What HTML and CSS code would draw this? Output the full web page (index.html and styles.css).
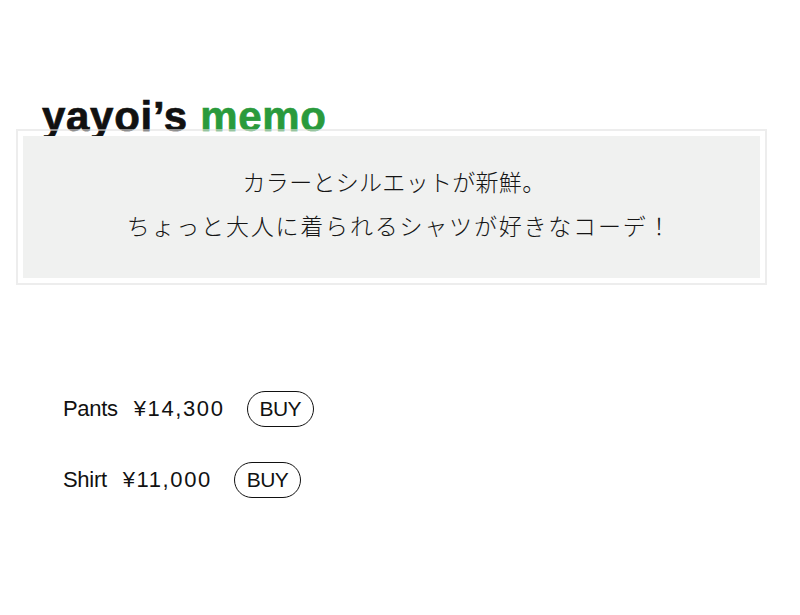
FILE: index.html
```html
<!DOCTYPE html>
<html>
<head>
    <title>yayoi's memo</title>
    <link rel="stylesheet" href="styles.css">
</head>
<body>
    <div class="page">
        <div class="memo-title">yayoi’s <span class="memo-green">memo</span></div>
        <div class="memo-box">
            <div class="memo-inner">
                <p class="line-short">カラーとシルエットが新鮮。</p>
                <p class="line-long">ちょっと大人に着られるシャツが好きなコーデ！</p>
            </div>
        </div>

        <div class="items">
            <div class="item">
                <span class="item-name">Pants</span>
                <span class="item-price">¥14,300</span>
                <a class="buy-btn">BUY</a>
            </div>
            <div class="item">
                <span class="item-name">Shirt</span>
                <span class="item-price">¥11,000</span>
                <a class="buy-btn">BUY</a>
            </div>
        </div>
    </div>
</body>
</html>
```

FILE: styles.css
```css
body {
    margin: 0;
    background: #fff;
    color: #222;
    font-family: "Liberation Sans", "Noto Sans CJK JP", sans-serif;
}

.page {
    padding: 93px 33px 0 16px;
}

.memo-title {
    margin-left: 26px;
    font-family: "Liberation Sans", sans-serif;
    font-weight: bold;
    font-size: 42px;
    line-height: 48px;
    letter-spacing: 0.7px;
    color: #111;
    -webkit-text-stroke: 0.7px #111;
}

.memo-green {
    color: #2a9a3c;
    -webkit-text-stroke: 0.7px #2a9a3c;
}

/* box sits over the bottom of the title, like the original */
.memo-box {
    position: relative;
    margin-top: -12px;
    border: 2px solid rgba(225, 225, 225, 0.6);
    padding: 5px;
}

.memo-inner {
    background: #f0f1f0;
    padding: 23px 0 31px;
    text-align: center;
    font-family: "Noto Sans CJK JP", sans-serif;
    font-weight: 300;
    font-size: 23px;
    line-height: 44px;
    color: #151515;
}

.memo-inner p {
    margin: 0;
}

.line-short {
    letter-spacing: 0.3px;
    padding-left: 5px;
}

.line-long {
    letter-spacing: 1.8px;
    padding-left: 16px;
}

.items {
    padding: 106px 0 0 47px;
}

.item {
    display: flex;
    align-items: center;
    height: 36px;
    margin-bottom: 35px;
    font-family: "Liberation Sans", sans-serif;
    font-size: 22px;
    color: #111;
}

.item-name {
    margin-right: 16px;
    letter-spacing: -0.3px;
}

.item-price {
    margin-right: 22px;
    letter-spacing: 1.6px;
}

.buy-btn {
    display: inline-block;
    box-sizing: border-box;
    height: 36px;
    line-height: 33px;
    padding: 0 12px;
    border: 1.5px solid #111;
    border-radius: 18px;
    font-size: 21px;
    letter-spacing: -0.6px;
}
```
